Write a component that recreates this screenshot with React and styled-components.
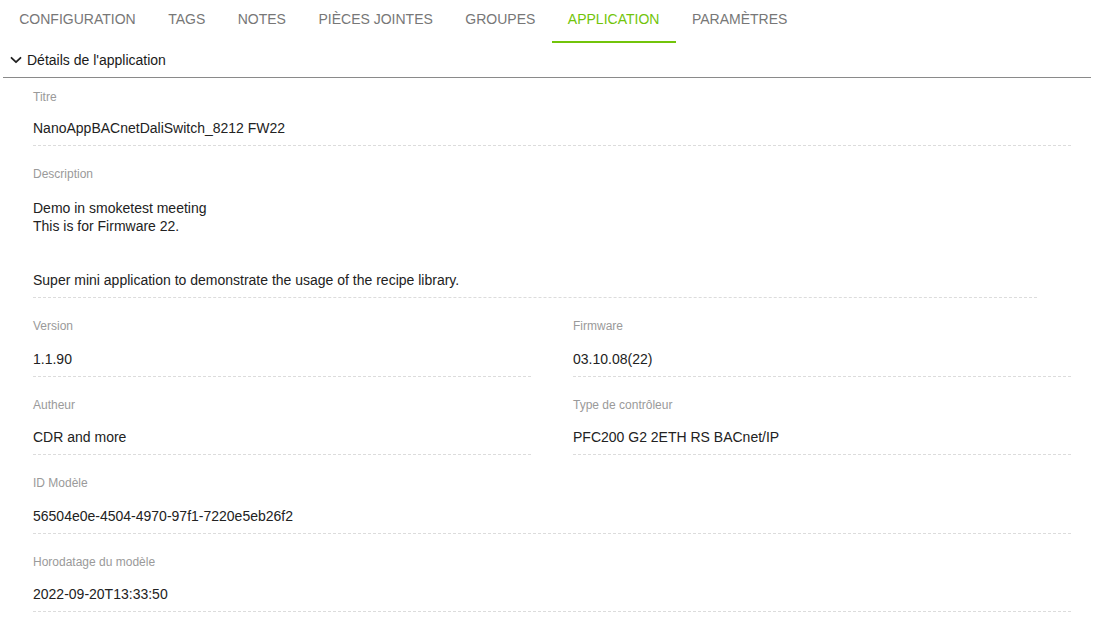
import React from 'react';
import styled, { createGlobalStyle } from 'styled-components';

const GlobalStyle = createGlobalStyle`
    body {
        margin: 0;
        background: #ffffff;
        font-family: 'Liberation Sans', Arial, sans-serif;
    }
`;

const tabs = [
    'Configuration',
    'Tags',
    'Notes',
    'Pièces jointes',
    'Groupes',
    'Application',
    'Paramètres'
];

const ChevronDown = () => (
    <svg width='12' height='12' viewBox='0 0 12 12' fill='none'>
        <path
            d='M1.5 3.8 L6 8.2 L10.5 3.8'
            stroke='#222'
            strokeWidth='1.8'
            strokeLinecap='round'
            strokeLinejoin='round'
        />
    </svg>
);

const Field = ({ label, value, narrow, spacing = 15.5 }) => (
    <FieldBox narrow={narrow}>
        <Label>{label}</Label>
        <Value spacing={spacing}>{value}</Value>
    </FieldBox>
);

const App = () => {
    return (
        <React.Fragment>
            <GlobalStyle />
            <Page>
                <TabBar>
                    {tabs.map((tab) => (
                        <Tab key={tab} active={tab === 'Application'}>
                            {tab}
                        </Tab>
                    ))}
                </TabBar>
                <Section>
                    <SectionHeader>
                        <ChevronDown />
                        <span>Détails de l'application</span>
                    </SectionHeader>
                    <Fields>
                        <Field
                            label='Titre'
                            spacing={14}
                            value='NanoAppBACnetDaliSwitch_8212 FW22'
                        />
                        <Field
                            label='Description'
                            spacing={17}
                            narrow
                            value={
                                'Demo in smoketest meeting\nThis is for Firmware 22.\n\n\nSuper mini application to demonstrate the usage of the recipe library.'
                            }
                        />
                        <Columns>
                            <Field label='Version' value='1.1.90' />
                            <Field label='Firmware' value='03.10.08(22)' />
                        </Columns>
                        <Columns>
                            <Field label='Autheur' value='CDR and more' />
                            <Field
                                label='Type de contrôleur'
                                value='PFC200 G2 2ETH RS BACnet/IP'
                            />
                        </Columns>
                        <Field
                            label='ID Modèle'
                            value='56504e0e-4504-4970-97f1-7220e5eb26f2'
                        />
                        <Field
                            label='Horodatage du modèle'
                            value='2022-09-20T13:33:50'
                        />
                    </Fields>
                </Section>
            </Page>
        </React.Fragment>
    );
};

const Page = styled.div`
    width: 1088px;
    padding-left: 3px;
`;

const TabBar = styled.div`
    display: flex;
    height: 43px;
`;

const Tab = styled.div`
    padding: 0 16.25px;
    height: 43px;
    box-sizing: border-box;
    line-height: 38px;
    font-size: 14px;
    text-transform: uppercase;
    color: ${(props) => (props.active ? '#72c40a' : '#777777')};
    border-bottom: 2px solid
        ${(props) => (props.active ? '#72c40a' : 'transparent')};
    white-space: nowrap;
`;

const Section = styled.div`
    display: flex;
    flex-direction: column;
`;

const SectionHeader = styled.div`
    display: flex;
    align-items: center;
    gap: 5px;
    height: 34px;
    padding-left: 7px;
    font-size: 14px;
    color: #1a1a1a;
    border-bottom: 1px solid #8a8a8a;
`;

const Fields = styled.div`
    display: flex;
    flex-direction: column;
    gap: 20px;
    padding: 11px 20px 0 30px;
`;

const Columns = styled.div`
    display: grid;
    grid-template-columns: 1fr 1fr;
    column-gap: 42px;
`;

const FieldBox = styled.div`
    padding-bottom: 8px;
    margin-right: ${(props) => (props.narrow ? '34px' : '0')};
    border-bottom: 1px dashed #dcdcdc;
`;

const Label = styled.div`
    font-size: 12px;
    line-height: 16px;
    color: #9a9a9a;
`;

const Value = styled.div`
    margin-top: ${(props) => props.spacing}px;
    font-size: 14px;
    line-height: 18px;
    color: #222222;
    white-space: pre-wrap;
`;

export default App;
